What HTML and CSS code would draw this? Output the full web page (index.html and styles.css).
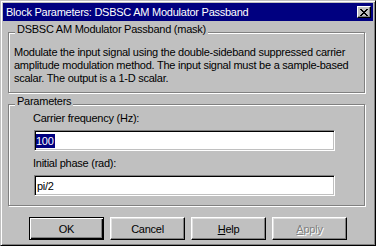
FILE: index.html
```html
<!DOCTYPE html>
<html lang="en">
<head>
    <meta charset="UTF-8">
    <title>Block Parameters: DSBSC AM Modulator Passband</title>
    <link rel="stylesheet" href="styles.css">
</head>
<body>
    <div class="window">
        <div class="titlebar">
            <span class="title">Block Parameters: DSBSC AM Modulator Passband</span>
            <span class="close">
                <svg width="8" height="7" viewBox="0 0 8 7">
                    <path d="M0 0h2v1h1v1h2v-1h1v-1h2v1h-1v1h-1v1h-1v1h1v1h1v1h1v1h-2v-1h-1v-1h-2v1h-1v1h-2v-1h1v-1h1v-1h1v-1h-1v-1h-1v-1h-1z" fill="#000"/>
                </svg>
            </span>
        </div>
        <div class="content">
            <div class="group group-desc">
                <span class="group-title">DSBSC AM Modulator Passband (mask)</span>
                <p class="desc">Modulate the input signal using the double-sideband suppressed carrier<br>amplitude modulation method. The input signal must be a sample-based<br>scalar. The output is a 1-D scalar.</p>
            </div>
            <div class="group group-params">
                <span class="group-title">Parameters</span>
                <label class="field-label">Carrier frequency (Hz):</label>
                <div class="edit"><span class="selected">100</span></div>
                <label class="field-label second">Initial phase (rad):</label>
                <div class="edit">pi/2</div>
            </div>
            <div class="buttons">
                <span class="btn default">OK</span>
                <span class="btn">Cancel</span>
                <span class="btn"><u>H</u>elp</span>
                <span class="btn disabled"><u>A</u>pply</span>
            </div>
        </div>
    </div>
</body>
</html>
```

FILE: styles.css
```css
body {
    margin: 0;
    padding: 0;
    font-family: "Liberation Sans", Arial, sans-serif;
    font-size: 11px;
    letter-spacing: -0.25px;
    color: #000;
}
.window {
    width: 376px;
    height: 246px;
    box-sizing: border-box;
    padding: 2px;
    background: #c0c0c0;
    border: 1px solid;
    border-color: #c0c0c0 #000 #000 #c0c0c0;
    box-shadow: inset 1px 1px #fff, inset -1px -1px #808080;
}
.titlebar {
    height: 18px;
    background: #000080;
    color: #fff;
    display: flex;
    align-items: center;
    justify-content: space-between;
    padding: 0 2px 0 3px;
}
.title {
    line-height: 13px;
}
.close {
    width: 14px;
    height: 12px;
    box-sizing: border-box;
    background: #c0c0c0;
    border: 1px solid;
    border-color: #fff #000 #000 #fff;
    box-shadow: inset -1px -1px #808080;
    display: flex;
    align-items: center;
    justify-content: center;
}
.close svg {
    display: block;
}
.content {
    padding: 11px 8px 0 5px;
}
.group {
    position: relative;
    border: 1px solid #808080;
    box-shadow: inset 1px 1px #fff, 1px 1px #fff;
}
.group-title {
    position: absolute;
    top: -10px;
    left: 6px;
    padding: 0 2px;
    line-height: 13px;
    background: #c0c0c0;
}
.group-desc {
    height: 61px;
    box-sizing: border-box;
}
.desc {
    margin: 0;
    padding: 13px 0 0 5px;
    line-height: 13px;
    white-space: nowrap;
}
.group-params {
    height: 102px;
    box-sizing: border-box;
    margin-top: 11px;
    padding: 7px 0 0 25px;
}
.field-label {
    display: block;
    line-height: 13px;
    margin: 0 0 5px -1px;
}
.field-label.second {
    margin-top: 6px;
}
.edit {
    width: 301px;
    height: 21px;
    box-sizing: border-box;
    background: #fff;
    border: 1px solid;
    border-color: #808080 #fff #fff #808080;
    box-shadow: inset 1px 1px #000, inset -1px -1px #c0c0c0;
    padding-left: 2px;
    display: flex;
    align-items: center;
    line-height: 14px;
}
.selected {
    background: #000080;
    color: #fff;
    margin-left: -1px;
    padding-right: 1px;
}
.buttons {
    display: flex;
    justify-content: center;
    gap: 6px;
    margin: 11px -8px 0 -5px;
    padding: 0 3px;
}
.btn {
    width: 75px;
    height: 23px;
    box-sizing: border-box;
    border: 1px solid;
    border-color: #fff #000 #000 #fff;
    box-shadow: inset -1px -1px #808080, inset 1px 1px #dfdfdf;
    display: flex;
    align-items: center;
    justify-content: center;
}
.btn.default {
    border-color: #000;
    box-shadow: inset 1px 1px #fff, inset -1px -1px #000, inset -2px -2px #808080;
}
.btn.disabled {
    color: #808080;
    text-shadow: 1px 1px #fff;
}
```
